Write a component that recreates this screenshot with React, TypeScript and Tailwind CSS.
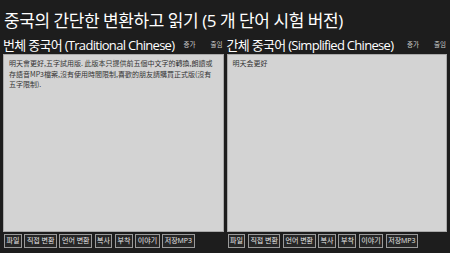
import React from "react";

const font = { fontFamily: '"Segoe UI", "Open Sans", "Noto Sans CJK KR", sans-serif' };

const buttons = ["파일", "직접 변환", "언어 변환", "복사", "부착", "이야기", "저장MP3"];

function Panel({ title, text }: { title: string; text: string }) {
  return (
    <div className="flex flex-col flex-1 min-w-0">
      <div className="flex items-end h-[16px] justify-between">
        <span className="text-[13px] leading-[16px] text-white whitespace-nowrap tracking-[-0.7px]">{title}</span>
        <div className="flex shrink-0 gap-[15px] text-[6.5px] leading-[8px] text-[#cfcfcf] mb-[4px] mr-[1px] whitespace-nowrap">
          <span>증가</span>
          <span>줄임</span>
        </div>
      </div>
      <div
        className="mt-[1px] h-[178px] bg-[#d3d3d3] border border-[#a9a9a9] px-[5px] py-[3px] text-[7px] leading-[10.5px] text-[#333333]"
        style={{ fontFamily: '"Noto Sans CJK TC", "Noto Sans CJK SC", sans-serif' }}
      >
        {text}
      </div>
      <div className="flex gap-[2.5px] mt-[2px] pl-[1px]">
        {buttons.map((b) => (
          <div
            key={b}
            className="h-[14px] px-[1.5px] border border-[#9a9a9a] bg-[#262626] text-[7px] leading-[12px] text-[#e6e6e6] whitespace-nowrap"
          >
            {b}
          </div>
        ))}
      </div>
    </div>
  );
}

export default function App() {
  return (
    <div className="w-[450px] h-[253px] bg-[#1d1d1d] overflow-hidden flex flex-col px-[3px]" style={font}>
      <div className="pt-[9px] pl-[1px] text-[17px] leading-[24px] text-white whitespace-nowrap tracking-[-0.45px]">
        중국의 간단한 변환하고 읽기 (5 개 단어 시험 버전)
      </div>
      <div className="flex gap-[3px] mt-[4px]">
        <Panel
          title="번체 중국어 (Traditional Chinese)"
          text="明天會更好,五字試用版. 此版本只提供前五個中文字的轉換,朗讀或存語音MP3檔案,沒有使用時間限制,喜歡的朋友請購買正式版(沒有五字限制)."
        />
        <Panel title="간체 중국어 (Simplified Chinese)" text="明天会更好" />
      </div>
    </div>
  );
}
